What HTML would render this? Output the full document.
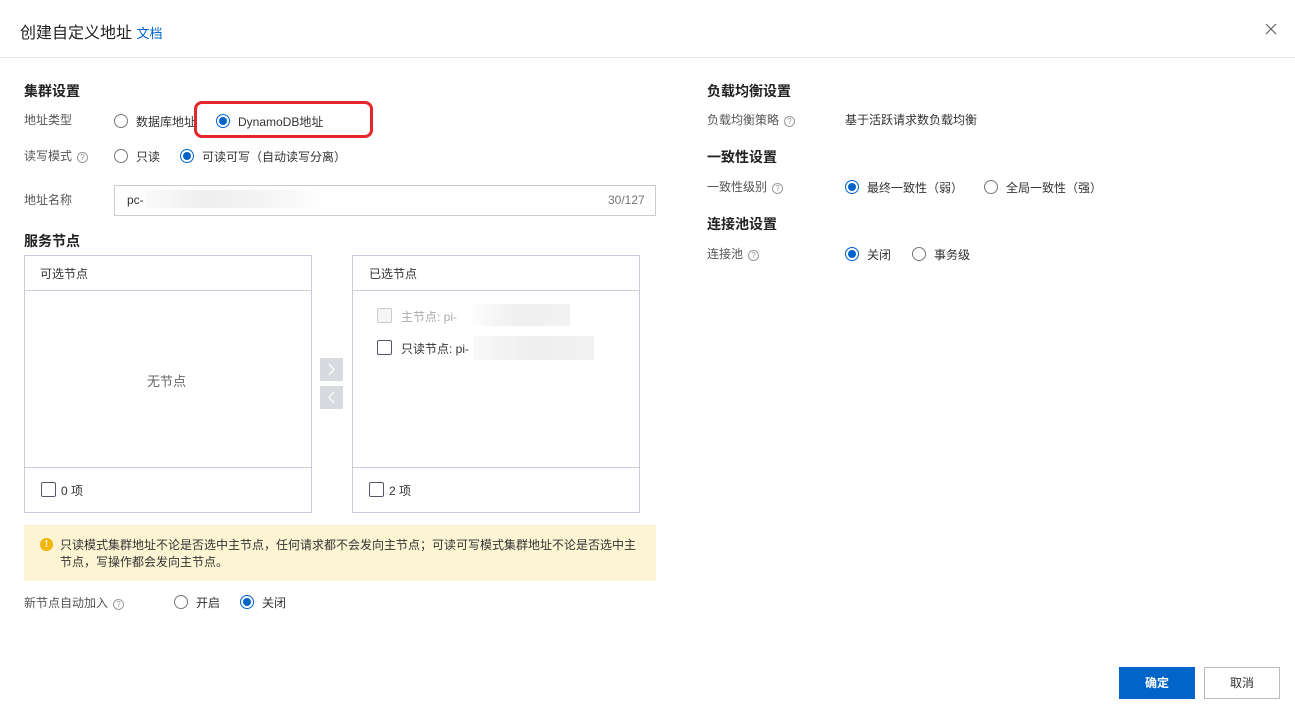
<!DOCTYPE html>
<html><head><meta charset="utf-8"><style>
*{box-sizing:border-box;margin:0;padding:0}
body{width:1295px;height:716px;background:#fff;font-family:"Liberation Sans","Noto Sans CJK SC",sans-serif;font-size:12px;color:#333;position:relative;overflow:hidden}
.a{position:absolute;white-space:nowrap}
.h{font-size:14px;font-weight:bold;color:#222}
.lbl{color:#555}
.r{position:absolute;width:14px;height:14px;border:1px solid #777;border-radius:50%;background:#fff}
.r.on{border-color:#0064c8}
.r.on:after{content:"";position:absolute;left:2px;top:2px;width:8px;height:8px;border-radius:50%;background:#0064c8}
.q{display:inline-block;width:11px;height:11px;border:1px solid #999;border-radius:50%;font-size:8px;line-height:9px;text-align:center;color:#999;margin-left:5px;vertical-align:0px}
.cb{position:absolute;width:15px;height:15px;border:1px solid #556;border-radius:2px;background:#fff}
.box{position:absolute;border:1px solid #ccd;}
</style></head><body>
<div class="a" style="left:20px;top:19px;font-size:16px;color:#222">创建自定义地址 <span style="font-size:13px;color:#0064c8">文档</span></div>
<svg class="a" style="left:1265px;top:23px" width="12" height="12" viewBox="0 0 12 12"><path d="M1 1L11 11M11 1L1 11" stroke="#666" stroke-width="1.2"/></svg>
<div class="a" style="left:0;top:57px;width:1295px;height:1px;background:#e3e3e3"></div>

<div class="a h" style="left:24px;top:81px">集群设置</div>
<div class="a lbl" style="left:24px;top:111px">地址类型</div>
<div class="r" style="left:114px;top:114px"></div><div class="a" style="left:136px;top:113px">数据库地址</div>
<div class="a" style="left:194px;top:101px;width:179px;height:37px;border:3px solid #e5262a;border-radius:8px"></div>
<div class="r on" style="left:216px;top:114px"></div><div class="a" style="left:238px;top:113px">DynamoDB地址</div>
<div class="a lbl" style="left:24px;top:147px">读写模式<span class="q">?</span></div>
<div class="r" style="left:114px;top:149px"></div><div class="a" style="left:136px;top:148px">只读</div>
<div class="r on" style="left:180px;top:149px"></div><div class="a" style="left:202px;top:148px">可读可写（自动读写分离）</div>
<div class="a lbl" style="left:24px;top:191px">地址名称</div>
<div class="box" style="left:114px;top:185px;width:542px;height:31px;border-color:#ccc"></div>
<div class="a" style="left:127px;top:193px;color:#333">pc-</div>
<div class="a" style="left:145px;top:190px;width:185px;height:18px;background:linear-gradient(90deg,#fafafa,#eee,#f5f5f5,#fff)"></div>
<div class="a" style="left:608px;top:193px;color:#777">30/127</div>

<div class="a h" style="left:24px;top:231px">服务节点</div>
<div class="box" style="left:24px;top:255px;width:288px;height:258px"></div>
<div class="a" style="left:25px;top:290px;width:286px;height:1px;background:#ccd"></div>
<div class="a" style="left:25px;top:467px;width:286px;height:1px;background:#ccd"></div>
<div class="a" style="left:40px;top:265px">可选节点</div>
<div class="a" style="left:147px;top:371px;font-size:13px;color:#666">无节点</div>
<div class="cb" style="left:41px;top:482px"></div><div class="a" style="left:61px;top:482px">0 项</div>

<div class="a" style="left:320px;top:358px;width:23px;height:23px;background:#d7dbe0"><svg width="23" height="23"><path d="M9 6L14 11.5L9 17" stroke="#fff" stroke-width="1.3" fill="none"/></svg></div>
<div class="a" style="left:320px;top:386px;width:23px;height:23px;background:#d7dbe0"><svg width="23" height="23"><path d="M14 6L9 11.5L14 17" stroke="#fff" stroke-width="1.3" fill="none"/></svg></div>

<div class="box" style="left:352px;top:255px;width:288px;height:258px"></div>
<div class="a" style="left:353px;top:290px;width:286px;height:1px;background:#ccd"></div>
<div class="a" style="left:353px;top:467px;width:286px;height:1px;background:#ccd"></div>
<div class="a" style="left:369px;top:265px">已选节点</div>
<div class="cb" style="left:377px;top:308px;border-color:#ccc;background:#f5f5f5"></div><div class="a" style="left:401px;top:308px;color:#aaa">主节点: pi-</div>
<div class="a" style="left:465px;top:304px;width:105px;height:22px;background:linear-gradient(90deg,#fff,#efefef,#f2f2f2)"></div>
<div class="cb" style="left:377px;top:340px"></div><div class="a" style="left:401px;top:340px">只读节点: pi-</div>
<div class="a" style="left:474px;top:336px;width:120px;height:24px;background:linear-gradient(90deg,#f8f8f8,#eee,#f2f2f2)"></div>
<div class="cb" style="left:369px;top:482px"></div><div class="a" style="left:389px;top:482px">2 项</div>

<div class="a" style="left:24px;top:525px;width:632px;height:56px;background:#fdf4d4"></div>
<div class="a" style="left:40px;top:538px;width:13px;height:13px;border-radius:50%;background:#f2b500;color:#fff;font-size:10px;font-weight:bold;text-align:center;line-height:13px">!</div>
<div class="a" style="left:60px;top:537px;line-height:17px;color:#333">只读模式集群地址不论是否选中主节点，任何请求都不会发向主节点；可读可写模式集群地址不论是否选中主<br>节点，写操作都会发向主节点。</div>

<div class="a lbl" style="left:24px;top:594px">新节点自动加入<span class="q">?</span></div>
<div class="r" style="left:174px;top:595px"></div><div class="a" style="left:196px;top:594px">开启</div>
<div class="r on" style="left:240px;top:595px"></div><div class="a" style="left:262px;top:594px">关闭</div>

<div class="a h" style="left:707px;top:81px">负载均衡设置</div>
<div class="a lbl" style="left:707px;top:111px">负载均衡策略<span class="q">?</span></div>
<div class="a" style="left:845px;top:111px">基于活跃请求数负载均衡</div>
<div class="a h" style="left:707px;top:147px">一致性设置</div>
<div class="a lbl" style="left:707px;top:178px">一致性级别<span class="q">?</span></div>
<div class="r on" style="left:845px;top:180px"></div><div class="a" style="left:867px;top:179px">最终一致性（弱）</div>
<div class="r" style="left:984px;top:180px"></div><div class="a" style="left:1006px;top:179px">全局一致性（强）</div>
<div class="a h" style="left:707px;top:214px">连接池设置</div>
<div class="a lbl" style="left:707px;top:245px">连接池<span class="q">?</span></div>
<div class="r on" style="left:845px;top:247px"></div><div class="a" style="left:867px;top:246px">关闭</div>
<div class="r" style="left:912px;top:247px"></div><div class="a" style="left:934px;top:246px">事务级</div>

<div class="a" style="left:1119px;top:667px;width:76px;height:32px;background:#0064c8;color:#fff;font-weight:bold;text-align:center;line-height:32px">确定</div>
<div class="a" style="left:1204px;top:667px;width:76px;height:32px;border:1px solid #bbb;color:#333;text-align:center;line-height:30px">取消</div>
</body></html>
